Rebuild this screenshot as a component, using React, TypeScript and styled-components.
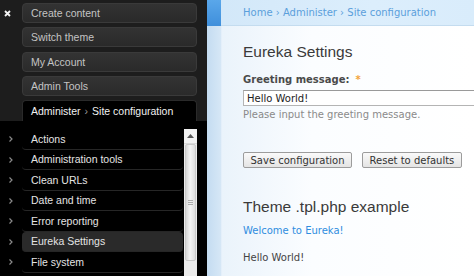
import React from "react";
import styled, { createGlobalStyle } from "styled-components";

const Global = createGlobalStyle`
  html, body { margin: 0; padding: 0; background: #fff; }
  body { width: 474px; height: 276px; overflow: hidden; }
`;

const Page = styled.div`
  display: flex;
  width: 474px;
  height: 276px;
  overflow: hidden;
`;

/* ---------- left dark panel ---------- */
const Side = styled.div`
  width: 207px;
  flex: none;
  display: flex;
  flex-direction: column;
  background: #000;
  font-family: "Liberation Sans", Arial, sans-serif;
  font-size: 10.5px;
`;

const Top = styled.div`
  background: #1d1d1d;
  display: flex;
  padding-top: 3px;
`;

const CloseCol = styled.div`
  width: 22px;
  display: flex;
  justify-content: center;
  padding-top: 7px;
  padding-right: 8px;
  box-sizing: border-box;
`;

const MenuCol = styled.div`
  width: 175px;
  display: flex;
  flex-direction: column;
  gap: 4.25px;
`;

const MenuButton = styled.div`
  height: 20px;
  box-sizing: border-box;
  border: 1px solid #3a3a3a;
  border-radius: 4px;
  background: linear-gradient(#333, #2a2a2a);
  color: #c4c4c4;
  display: flex;
  align-items: center;
  padding-left: 8px;
`;

const Tab = styled.div`
  height: 21px;
  box-sizing: border-box;
  border: 1px solid #2a2a2a;
  border-bottom: none;
  border-radius: 4px 4px 0 0;
  background: #000;
  color: #f2f2f2;
  display: flex;
  align-items: center;
  padding-left: 8px;
`;

const Sep = styled.span`
  color: #999;
  margin: 0 4px;
`;

const Lower = styled.div`
  flex: 1;
  display: flex;
  padding-top: 8px;
  min-height: 0;
`;

const List = styled.div`
  width: 183px;
  display: flex;
  flex-direction: column;
`;

const Row = styled.div`
  height: 20.5px;
  flex: none;
  display: flex;
`;

const Chevron = styled.div`
  width: 22px;
  display: flex;
  align-items: center;
  justify-content: center;
  box-sizing: border-box;
`;

const Item = styled.div<{ $active?: boolean }>`
  flex: 1;
  display: flex;
  align-items: center;
  padding-left: 9px;
  color: #e4e4e4;
  border-bottom: 1px solid #262626;
  border-radius: 4px;
  background: ${(p) => (p.$active ? "#2a2a2a" : "transparent")};
`;

const Scroll = styled.div`
  width: 13px;
  margin-left: 1px;
  display: flex;
  flex-direction: column;
  background: #ececec;
`;

const ScrollBtn = styled.div`
  height: 15px;
  flex: none;
  display: flex;
  align-items: center;
  justify-content: center;
  background: #f1f1f1;
  border-bottom: 1px solid #d8d8d8;
  box-sizing: border-box;
`;

const Thumb = styled.div`
  height: 115px;
  flex: none;
  margin: 0 1px;
  border: 1px solid #c9c9c9;
  border-radius: 2px;
  background: linear-gradient(90deg, #d6d6d6, #f4f4f4 45%, #dcdcdc);
  display: flex;
  align-items: center;
  justify-content: center;
`;

/* ---------- right content ---------- */
const Main = styled.div`
  flex: 1;
  display: flex;
  flex-direction: column;
  min-width: 0;
  font-family: "DejaVu Sans", Verdana, sans-serif;
  font-size: 10px;
`;

const Header = styled.div`
  height: 26px;
  flex: none;
  display: flex;
`;

const BlueTab = styled.div`
  width: 14px;
  background: linear-gradient(#5aa7ea, #3f8fdb);
`;

const Crumbs = styled.div`
  flex: 1;
  display: flex;
  align-items: center;
  padding-left: 22px;
  padding-bottom: 1px;
  border-bottom: 1px solid #c4dcef;
  background: linear-gradient(90deg, #d3e8f9, #dceefc 60%, #d9ecfb);
  color: #5b9fdb;
  white-space: nowrap;
`;

const Body = styled.div`
  flex: 1;
  display: flex;
  min-height: 0;
`;

const Strip = styled.div`
  width: 14px;
  flex: none;
  background: linear-gradient(90deg, #c4dcf1, #d6e7f6);
  border-right: 1px solid #e4effa;
`;

const Content = styled.div`
  flex: 1;
  padding-left: 21px;
  padding-top: 17px;
  background: linear-gradient(90deg, #eaf3fb, #fbfdff 90px, #fff);
  color: #444;
  white-space: nowrap;
  min-width: 0;
`;

const Heading = styled.h2<{ $mb: number }>`
  margin: 0 0 ${(p) => p.$mb}px 0;
  font-family: "Liberation Sans", Arial, sans-serif;
  font-weight: normal;
  font-size: 15.5px;
  line-height: 18px;
  color: #3a3a3a;
`;

const Label = styled.div`
  font-weight: bold;
  line-height: 12px;
  color: #4a4a4a;
  margin-bottom: 4px;
`;

const Req = styled.span`
  color: #f3a43a;
  margin-left: 6px;
`;

const Input = styled.div`
  width: 260px;
  height: 16px;
  box-sizing: border-box;
  border: 1px solid #b4b4b4;
  border-top-color: #9a9a9a;
  background: #fff;
  color: #222;
  display: flex;
  align-items: center;
  padding-left: 3px;
  margin-bottom: 3px;
`;

const Hint = styled.div`
  color: #8a8a8a;
  line-height: 12px;
  margin-bottom: 31px;
`;

const Buttons = styled.div`
  display: flex;
  gap: 10px;
  margin-bottom: 30px;
`;

const Button = styled.div`
  height: 16px;
  box-sizing: border-box;
  padding: 0 6.5px;
  border: 1px solid #9c9c9c;
  border-radius: 2px;
  background: linear-gradient(#fafafa, #e4e4e4);
  color: #333;
  display: flex;
  align-items: center;
`;

const Link = styled.div`
  color: #2f8de0;
  line-height: 12px;
  margin-bottom: 15px;
`;

const Text = styled.div`
  color: #444;
  line-height: 12px;
`;

const ChevronIcon = () => (
  <svg width="4" height="6" viewBox="0 0 4 6">
    <path d="M0.5 0.5 L3 3 L0.5 5.5" fill="none" stroke="#8a8a8a" strokeWidth="1.2" />
  </svg>
);

const buttons = ["Create content", "Switch theme", "My Account", "Admin Tools"];
const items = [
  "Actions",
  "Administration tools",
  "Clean URLs",
  "Date and time",
  "Error reporting",
  "Eureka Settings",
  "File system",
];

export default function App() {
  return (
    <Page>
      <Global />
      <Side>
        <Top>
          <CloseCol>
            <svg width="7" height="7" viewBox="0 0 7 7">
              <path d="M1 1 L6 6 M6 1 L1 6" stroke="#f4f4f4" strokeWidth="1.8" />
            </svg>
          </CloseCol>
          <MenuCol>
            {buttons.map((b) => (
              <MenuButton key={b}>{b}</MenuButton>
            ))}
            <Tab>
              Administer<Sep>›</Sep>Site configuration
            </Tab>
          </MenuCol>
        </Top>
        <Lower>
          <List>
            {items.map((it) => (
              <Row key={it}>
                <Chevron>
                  <ChevronIcon />
                </Chevron>
                <Item $active={it === "Eureka Settings"}>{it}</Item>
              </Row>
            ))}
          </List>
          <Scroll>
            <ScrollBtn>
              <svg width="7" height="4" viewBox="0 0 7 4">
                <path d="M0 4 L3.5 0 L7 4 Z" fill="#555" />
              </svg>
            </ScrollBtn>
            <Thumb>
              <svg width="5" height="5" viewBox="0 0 5 5">
                <path d="M0 0.5 H5 M0 2.5 H5 M0 4.5 H5" stroke="#aaa" strokeWidth="1" />
              </svg>
            </Thumb>
          </Scroll>
        </Lower>
      </Side>
      <Main>
        <Header>
          <BlueTab />
          <Crumbs>Home › Administer › Site configuration</Crumbs>
        </Header>
        <Body>
          <Strip />
          <Content>
            <Heading $mb={13}>Eureka Settings</Heading>
            <Label>
              Greeting message:<Req>*</Req>
            </Label>
            <Input>Hello World!</Input>
            <Hint>Please input the greeting message.</Hint>
            <Buttons>
              <Button>Save configuration</Button>
              <Button>Reset to defaults</Button>
            </Buttons>
            <Heading $mb={9}>Theme .tpl.php example</Heading>
            <Link>Welcome to Eureka!</Link>
            <Text>Hello World!</Text>
          </Content>
        </Body>
      </Main>
    </Page>
  );
}
